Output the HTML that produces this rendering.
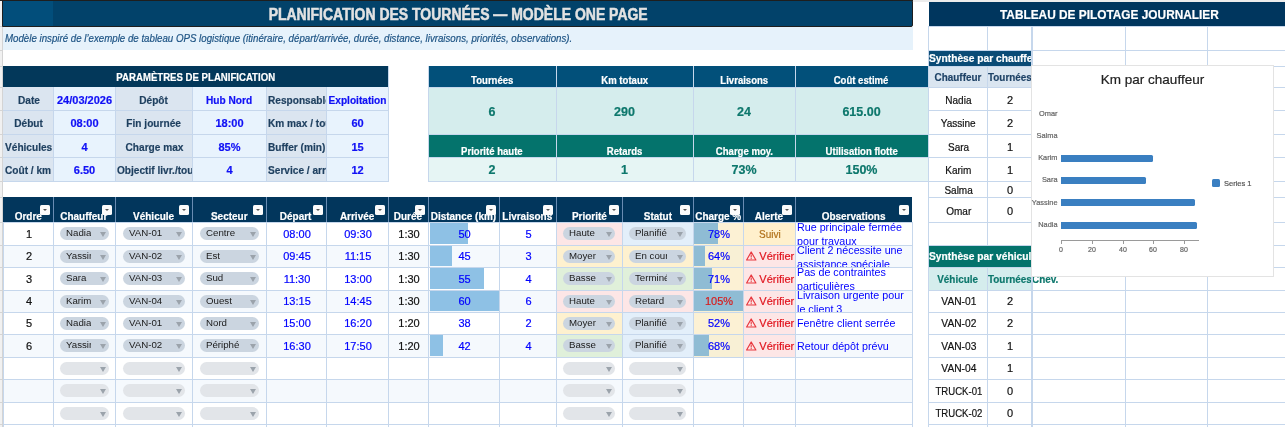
<!DOCTYPE html><html><head><meta charset="utf-8"><style>html,body{margin:0;padding:0;background:#fff;}#c{position:relative;width:1285px;height:427px;overflow:hidden;background:#fff;font-family:"Liberation Sans",sans-serif;}#c div{position:absolute;box-sizing:border-box;}#c .t{display:flex;white-space:nowrap;overflow:hidden;will-change:transform;-webkit-text-stroke:0.2px currentColor;}#c .ns{-webkit-text-stroke:0;}</style></head><body><div id="c">
<div style="left:0px;top:0px;width:3px;height:427px;background:#f1f1f1;"></div>
<div style="left:2px;top:0px;width:1px;height:427px;background:#d4d4d4;"></div>
<div style="left:0px;top:26px;width:2px;height:1px;background:#d4d4d4;"></div>
<div style="left:0px;top:50px;width:2px;height:1px;background:#d4d4d4;"></div>
<div style="left:0px;top:66px;width:2px;height:1px;background:#d4d4d4;"></div>
<div style="left:0px;top:87px;width:2px;height:1px;background:#d4d4d4;"></div>
<div style="left:0px;top:110px;width:2px;height:1px;background:#d4d4d4;"></div>
<div style="left:0px;top:134px;width:2px;height:1px;background:#d4d4d4;"></div>
<div style="left:0px;top:157px;width:2px;height:1px;background:#d4d4d4;"></div>
<div style="left:0px;top:181px;width:2px;height:1px;background:#d4d4d4;"></div>
<div style="left:0px;top:197px;width:2px;height:1px;background:#d4d4d4;"></div>
<div style="left:0px;top:222px;width:2px;height:1px;background:#d4d4d4;"></div>
<div style="left:0px;top:245px;width:2px;height:1px;background:#d4d4d4;"></div>
<div style="left:0px;top:267px;width:2px;height:1px;background:#d4d4d4;"></div>
<div style="left:0px;top:290px;width:2px;height:1px;background:#d4d4d4;"></div>
<div style="left:0px;top:312px;width:2px;height:1px;background:#d4d4d4;"></div>
<div style="left:0px;top:334px;width:2px;height:1px;background:#d4d4d4;"></div>
<div style="left:0px;top:357px;width:2px;height:1px;background:#d4d4d4;"></div>
<div style="left:0px;top:379px;width:2px;height:1px;background:#d4d4d4;"></div>
<div style="left:0px;top:402px;width:2px;height:1px;background:#d4d4d4;"></div>
<div style="left:0px;top:424px;width:2px;height:1px;background:#d4d4d4;"></div>
<div style="left:0px;top:447px;width:2px;height:1px;background:#d4d4d4;"></div>
<div style="left:0px;top:0px;width:913px;height:1px;background:#262626;"></div>
<div style="left:913px;top:0px;width:372px;height:2px;background:#ececec;"></div>
<div style="left:2px;top:0px;width:911px;height:27px;background:#02426a;border:1px solid #1e1e1e;border-radius:0 2px 2px 0;"></div>
<div style="left:3px;top:1px;width:50px;height:25px;background:#024e7b;"></div>
<div class="t" style="left:3px;top:2px;width:910px;height:25px;justify-content:center;align-items:center;font-size:15.8px;color:#e2e2e2;font-weight:bold;font-style:normal;-webkit-text-stroke:0.5px #e2e2e2;"><span style="display:inline-block;transform:scaleX(0.885);transform-origin:center">PLANIFICATION DES TOURNÉES — MODÈLE ONE PAGE</span></div>
<div style="left:3px;top:27px;width:910px;height:23px;background:#e6f2fb;"></div>
<div class="t" style="left:3px;top:26px;width:910px;height:24px;justify-content:flex-start;align-items:center;font-size:10px;color:#1f5585;font-weight:normal;font-style:italic;padding-left:2px;"><span style="display:inline-block;transform:scaleX(0.97);transform-origin:left">Modèle inspiré de l’exemple de tableau OPS logistique (itinéraire, départ/arrivée, durée, distance, livraisons, priorités, observations).</span></div>
<div style="left:3px;top:66px;width:385px;height:21px;background:#03385a;"></div>
<div class="t" style="left:3px;top:66px;width:385px;height:21px;justify-content:center;align-items:center;font-size:10.5px;color:#fff;font-weight:bold;font-style:normal;"><span style="display:inline-block;transform:scaleX(0.915);transform-origin:center">PARAMÈTRES DE PLANIFICATION</span></div>
<div style="left:3px;top:87px;width:50px;height:23px;background:#dbe5f0;"></div>
<div class="t" style="left:4px;top:87.7px;width:49px;height:23px;justify-content:center;align-items:center;font-size:11px;color:#1e3f5f;font-weight:bold;font-style:normal;"><span style="display:inline-block;transform:scaleX(0.92);transform-origin:center">Date</span></div>
<div style="left:53px;top:87px;width:62px;height:23px;background:#e8f3fd;"></div>
<div class="t" style="left:54px;top:87.7px;width:61px;height:23px;justify-content:center;align-items:center;font-size:11px;color:#1010f5;font-weight:bold;font-style:normal;">24/03/2026</div>
<div style="left:115px;top:87px;width:77px;height:23px;background:#dbe5f0;"></div>
<div class="t" style="left:116px;top:87.7px;width:76px;height:23px;justify-content:center;align-items:center;font-size:11px;color:#1e3f5f;font-weight:bold;font-style:normal;"><span style="display:inline-block;transform:scaleX(0.92);transform-origin:center">Dépôt</span></div>
<div style="left:192px;top:87px;width:74px;height:23px;background:#e8f3fd;"></div>
<div class="t" style="left:193px;top:87.7px;width:73px;height:23px;justify-content:center;align-items:center;font-size:11px;color:#1010f5;font-weight:bold;font-style:normal;"><span style="display:inline-block;transform:scaleX(0.92);transform-origin:center">Hub Nord</span></div>
<div style="left:266px;top:87px;width:60px;height:23px;background:#dbe5f0;"></div>
<div class="t" style="left:267px;top:87.7px;width:59px;height:23px;justify-content:flex-start;align-items:center;font-size:11px;color:#1e3f5f;font-weight:bold;font-style:normal;padding-left:1px;"><span style="display:inline-block;transform:scaleX(0.92);transform-origin:left">Responsable</span></div>
<div style="left:326px;top:87px;width:62px;height:23px;background:#e8f3fd;"></div>
<div class="t" style="left:327px;top:87.7px;width:61px;height:23px;justify-content:center;align-items:center;font-size:11px;color:#1010f5;font-weight:bold;font-style:normal;"><span style="display:inline-block;transform:scaleX(0.92);transform-origin:center">Exploitation</span></div>
<div style="left:3px;top:110px;width:50px;height:24px;background:#dbe5f0;"></div>
<div class="t" style="left:4px;top:110.7px;width:49px;height:24px;justify-content:center;align-items:center;font-size:11px;color:#1e3f5f;font-weight:bold;font-style:normal;"><span style="display:inline-block;transform:scaleX(0.92);transform-origin:center">Début</span></div>
<div style="left:53px;top:110px;width:62px;height:24px;background:#e8f3fd;"></div>
<div class="t" style="left:54px;top:110.7px;width:61px;height:24px;justify-content:center;align-items:center;font-size:11px;color:#1010f5;font-weight:bold;font-style:normal;">08:00</div>
<div style="left:115px;top:110px;width:77px;height:24px;background:#dbe5f0;"></div>
<div class="t" style="left:116px;top:110.7px;width:76px;height:24px;justify-content:center;align-items:center;font-size:11px;color:#1e3f5f;font-weight:bold;font-style:normal;"><span style="display:inline-block;transform:scaleX(0.92);transform-origin:center">Fin journée</span></div>
<div style="left:192px;top:110px;width:74px;height:24px;background:#e8f3fd;"></div>
<div class="t" style="left:193px;top:110.7px;width:73px;height:24px;justify-content:center;align-items:center;font-size:11px;color:#1010f5;font-weight:bold;font-style:normal;">18:00</div>
<div style="left:266px;top:110px;width:60px;height:24px;background:#dbe5f0;"></div>
<div class="t" style="left:267px;top:110.7px;width:59px;height:24px;justify-content:flex-start;align-items:center;font-size:11px;color:#1e3f5f;font-weight:bold;font-style:normal;padding-left:1px;"><span style="display:inline-block;transform:scaleX(0.92);transform-origin:left">Km max / tournée</span></div>
<div style="left:326px;top:110px;width:62px;height:24px;background:#e8f3fd;"></div>
<div class="t" style="left:327px;top:110.7px;width:61px;height:24px;justify-content:center;align-items:center;font-size:11px;color:#1010f5;font-weight:bold;font-style:normal;">60</div>
<div style="left:3px;top:134px;width:50px;height:23px;background:#dbe5f0;"></div>
<div class="t" style="left:4px;top:134.7px;width:49px;height:23px;justify-content:flex-start;align-items:center;font-size:11px;color:#1e3f5f;font-weight:bold;font-style:normal;padding-left:1px;"><span style="display:inline-block;transform:scaleX(0.92);transform-origin:left">Véhicules</span></div>
<div style="left:53px;top:134px;width:62px;height:23px;background:#e8f3fd;"></div>
<div class="t" style="left:54px;top:134.7px;width:61px;height:23px;justify-content:center;align-items:center;font-size:11px;color:#1010f5;font-weight:bold;font-style:normal;">4</div>
<div style="left:115px;top:134px;width:77px;height:23px;background:#dbe5f0;"></div>
<div class="t" style="left:116px;top:134.7px;width:76px;height:23px;justify-content:center;align-items:center;font-size:11px;color:#1e3f5f;font-weight:bold;font-style:normal;"><span style="display:inline-block;transform:scaleX(0.92);transform-origin:center">Charge max</span></div>
<div style="left:192px;top:134px;width:74px;height:23px;background:#e8f3fd;"></div>
<div class="t" style="left:193px;top:134.7px;width:73px;height:23px;justify-content:center;align-items:center;font-size:11px;color:#1010f5;font-weight:bold;font-style:normal;">85%</div>
<div style="left:266px;top:134px;width:60px;height:23px;background:#dbe5f0;"></div>
<div class="t" style="left:267px;top:134.7px;width:59px;height:23px;justify-content:flex-start;align-items:center;font-size:11px;color:#1e3f5f;font-weight:bold;font-style:normal;padding-left:1px;"><span style="display:inline-block;transform:scaleX(0.92);transform-origin:left">Buffer (min)</span></div>
<div style="left:326px;top:134px;width:62px;height:23px;background:#e8f3fd;"></div>
<div class="t" style="left:327px;top:134.7px;width:61px;height:23px;justify-content:center;align-items:center;font-size:11px;color:#1010f5;font-weight:bold;font-style:normal;">15</div>
<div style="left:3px;top:157px;width:50px;height:24px;background:#dbe5f0;"></div>
<div class="t" style="left:4px;top:157.7px;width:49px;height:24px;justify-content:flex-start;align-items:center;font-size:11px;color:#1e3f5f;font-weight:bold;font-style:normal;padding-left:1px;"><span style="display:inline-block;transform:scaleX(0.92);transform-origin:left">Coût / km</span></div>
<div style="left:53px;top:157px;width:62px;height:24px;background:#e8f3fd;"></div>
<div class="t" style="left:54px;top:157.7px;width:61px;height:24px;justify-content:center;align-items:center;font-size:11px;color:#1010f5;font-weight:bold;font-style:normal;">6.50</div>
<div style="left:115px;top:157px;width:77px;height:24px;background:#dbe5f0;"></div>
<div class="t" style="left:116px;top:157.7px;width:76px;height:24px;justify-content:flex-start;align-items:center;font-size:11px;color:#1e3f5f;font-weight:bold;font-style:normal;padding-left:1px;"><span style="display:inline-block;transform:scaleX(0.92);transform-origin:left">Objectif livr./tournée</span></div>
<div style="left:192px;top:157px;width:74px;height:24px;background:#e8f3fd;"></div>
<div class="t" style="left:193px;top:157.7px;width:73px;height:24px;justify-content:center;align-items:center;font-size:11px;color:#1010f5;font-weight:bold;font-style:normal;">4</div>
<div style="left:266px;top:157px;width:60px;height:24px;background:#dbe5f0;"></div>
<div class="t" style="left:267px;top:157.7px;width:59px;height:24px;justify-content:flex-start;align-items:center;font-size:11px;color:#1e3f5f;font-weight:bold;font-style:normal;padding-left:1px;"><span style="display:inline-block;transform:scaleX(0.92);transform-origin:left">Service / arrêt</span></div>
<div style="left:326px;top:157px;width:62px;height:24px;background:#e8f3fd;"></div>
<div class="t" style="left:327px;top:157.7px;width:61px;height:24px;justify-content:center;align-items:center;font-size:11px;color:#1010f5;font-weight:bold;font-style:normal;">12</div>
<div style="left:53px;top:87px;width:1px;height:94px;background:#c6d7ec;"></div>
<div style="left:115px;top:87px;width:1px;height:94px;background:#c6d7ec;"></div>
<div style="left:192px;top:87px;width:1px;height:94px;background:#c6d7ec;"></div>
<div style="left:266px;top:87px;width:1px;height:94px;background:#c6d7ec;"></div>
<div style="left:326px;top:87px;width:1px;height:94px;background:#c6d7ec;"></div>
<div style="left:3px;top:110px;width:385px;height:1px;background:#c6d7ec;"></div>
<div style="left:3px;top:134px;width:385px;height:1px;background:#c6d7ec;"></div>
<div style="left:3px;top:157px;width:385px;height:1px;background:#c6d7ec;"></div>
<div style="left:388px;top:66px;width:1px;height:115px;background:#c6d7ec;"></div>
<div style="left:3px;top:181px;width:386px;height:1px;background:#c6d7ec;"></div>
<div style="left:428px;top:66px;width:128px;height:21px;background:#02507a;"></div>
<div class="t" style="left:428px;top:66px;width:128px;height:21px;justify-content:center;align-items:flex-end;font-size:10.5px;color:#fff;font-weight:bold;font-style:normal;padding-bottom:0.7px;"><span style="display:inline-block;transform:scaleX(0.91);transform-origin:center">Tournées</span></div>
<div style="left:428px;top:87px;width:128px;height:47px;background:#d5eded;"></div>
<div class="t" style="left:428px;top:88px;width:128px;height:47px;justify-content:center;align-items:center;font-size:12.5px;color:#0d776c;font-weight:bold;font-style:normal;">6</div>
<div style="left:428px;top:134px;width:128px;height:23px;background:#04736c;"></div>
<div class="t" style="left:428px;top:134px;width:128px;height:23px;justify-content:center;align-items:flex-end;font-size:10.5px;color:#fff;font-weight:bold;font-style:normal;padding-bottom:0px;"><span style="display:inline-block;transform:scaleX(0.91);transform-origin:center">Priorité haute</span></div>
<div style="left:428px;top:157px;width:128px;height:24px;background:#e6f5f4;"></div>
<div class="t" style="left:428px;top:157.5px;width:128px;height:24px;justify-content:center;align-items:center;font-size:12.5px;color:#0d776c;font-weight:bold;font-style:normal;">2</div>
<div style="left:556px;top:66px;width:137px;height:21px;background:#02507a;"></div>
<div class="t" style="left:556px;top:66px;width:137px;height:21px;justify-content:center;align-items:flex-end;font-size:10.5px;color:#fff;font-weight:bold;font-style:normal;padding-bottom:0.7px;"><span style="display:inline-block;transform:scaleX(0.91);transform-origin:center">Km totaux</span></div>
<div style="left:556px;top:87px;width:137px;height:47px;background:#d5eded;"></div>
<div class="t" style="left:556px;top:88px;width:137px;height:47px;justify-content:center;align-items:center;font-size:12.5px;color:#0d776c;font-weight:bold;font-style:normal;">290</div>
<div style="left:556px;top:134px;width:137px;height:23px;background:#04736c;"></div>
<div class="t" style="left:556px;top:134px;width:137px;height:23px;justify-content:center;align-items:flex-end;font-size:10.5px;color:#fff;font-weight:bold;font-style:normal;padding-bottom:0px;"><span style="display:inline-block;transform:scaleX(0.91);transform-origin:center">Retards</span></div>
<div style="left:556px;top:157px;width:137px;height:24px;background:#e6f5f4;"></div>
<div class="t" style="left:556px;top:157.5px;width:137px;height:24px;justify-content:center;align-items:center;font-size:12.5px;color:#0d776c;font-weight:bold;font-style:normal;">1</div>
<div style="left:693px;top:66px;width:102px;height:21px;background:#02507a;"></div>
<div class="t" style="left:693px;top:66px;width:102px;height:21px;justify-content:center;align-items:flex-end;font-size:10.5px;color:#fff;font-weight:bold;font-style:normal;padding-bottom:0.7px;"><span style="display:inline-block;transform:scaleX(0.91);transform-origin:center">Livraisons</span></div>
<div style="left:693px;top:87px;width:102px;height:47px;background:#d5eded;"></div>
<div class="t" style="left:693px;top:88px;width:102px;height:47px;justify-content:center;align-items:center;font-size:12.5px;color:#0d776c;font-weight:bold;font-style:normal;">24</div>
<div style="left:693px;top:134px;width:102px;height:23px;background:#04736c;"></div>
<div class="t" style="left:693px;top:134px;width:102px;height:23px;justify-content:center;align-items:flex-end;font-size:10.5px;color:#fff;font-weight:bold;font-style:normal;padding-bottom:0px;"><span style="display:inline-block;transform:scaleX(0.91);transform-origin:center">Charge moy.</span></div>
<div style="left:693px;top:157px;width:102px;height:24px;background:#e6f5f4;"></div>
<div class="t" style="left:693px;top:157.5px;width:102px;height:24px;justify-content:center;align-items:center;font-size:12.5px;color:#0d776c;font-weight:bold;font-style:normal;">73%</div>
<div style="left:795px;top:66px;width:133px;height:21px;background:#02507a;"></div>
<div class="t" style="left:795px;top:66px;width:133px;height:21px;justify-content:center;align-items:flex-end;font-size:10.5px;color:#fff;font-weight:bold;font-style:normal;padding-bottom:0.7px;"><span style="display:inline-block;transform:scaleX(0.91);transform-origin:center">Coût estimé</span></div>
<div style="left:795px;top:87px;width:133px;height:47px;background:#d5eded;"></div>
<div class="t" style="left:795px;top:88px;width:133px;height:47px;justify-content:center;align-items:center;font-size:12.5px;color:#0d776c;font-weight:bold;font-style:normal;">615.00</div>
<div style="left:795px;top:134px;width:133px;height:23px;background:#04736c;"></div>
<div class="t" style="left:795px;top:134px;width:133px;height:23px;justify-content:center;align-items:flex-end;font-size:10.5px;color:#fff;font-weight:bold;font-style:normal;padding-bottom:0px;"><span style="display:inline-block;transform:scaleX(0.91);transform-origin:center">Utilisation flotte</span></div>
<div style="left:795px;top:157px;width:133px;height:24px;background:#e6f5f4;"></div>
<div class="t" style="left:795px;top:157.5px;width:133px;height:24px;justify-content:center;align-items:center;font-size:12.5px;color:#0d776c;font-weight:bold;font-style:normal;">150%</div>
<div style="left:556px;top:66px;width:1px;height:115px;background:#c6d7ec;"></div>
<div style="left:693px;top:66px;width:1px;height:115px;background:#c6d7ec;"></div>
<div style="left:795px;top:66px;width:1px;height:115px;background:#c6d7ec;"></div>
<div style="left:428px;top:66px;width:1px;height:115px;background:#c6d7ec;"></div>
<div style="left:428px;top:181px;width:500px;height:1px;background:#c6d7ec;"></div>
<div style="left:428px;top:134px;width:500px;height:1px;background:#c6d7ec;"></div>
<div style="left:428px;top:157px;width:500px;height:1px;background:#c6d7ec;"></div>
<div style="left:428px;top:87px;width:500px;height:1px;background:#c6d7ec;"></div>
<div style="left:3px;top:197px;width:909px;height:25px;background:#02365c;"></div>
<div class="t" style="left:3px;top:197px;width:50px;height:25px;justify-content:center;align-items:flex-end;font-size:10.5px;color:#fff;font-weight:bold;font-style:normal;padding-bottom:0.3px;"><span style="display:inline-block;transform:scaleX(0.95);transform-origin:center">Ordre</span></div>
<div style="left:40px;top:205px;width:10px;height:10px;background:#fbfbfb;border-radius:1.5px;"></div>
<div style="left:43px;top:209px;width:0;height:0;border-left:2px solid transparent;border-right:2px solid transparent;border-top:2px solid #555;"></div>
<div class="t" style="left:53px;top:197px;width:62px;height:25px;justify-content:center;align-items:flex-end;font-size:10.5px;color:#fff;font-weight:bold;font-style:normal;padding-bottom:0.3px;"><span style="display:inline-block;transform:scaleX(0.95);transform-origin:center">Chauffeur</span></div>
<div style="left:53px;top:197px;width:1px;height:25px;background:#6a8cb2;"></div>
<div style="left:102px;top:205px;width:10px;height:10px;background:#fbfbfb;border-radius:1.5px;"></div>
<div style="left:105px;top:209px;width:0;height:0;border-left:2px solid transparent;border-right:2px solid transparent;border-top:2px solid #555;"></div>
<div class="t" style="left:115px;top:197px;width:77px;height:25px;justify-content:center;align-items:flex-end;font-size:10.5px;color:#fff;font-weight:bold;font-style:normal;padding-bottom:0.3px;"><span style="display:inline-block;transform:scaleX(0.95);transform-origin:center">Véhicule</span></div>
<div style="left:115px;top:197px;width:1px;height:25px;background:#6a8cb2;"></div>
<div style="left:179px;top:205px;width:10px;height:10px;background:#fbfbfb;border-radius:1.5px;"></div>
<div style="left:182px;top:209px;width:0;height:0;border-left:2px solid transparent;border-right:2px solid transparent;border-top:2px solid #555;"></div>
<div class="t" style="left:192px;top:197px;width:74px;height:25px;justify-content:center;align-items:flex-end;font-size:10.5px;color:#fff;font-weight:bold;font-style:normal;padding-bottom:0.3px;"><span style="display:inline-block;transform:scaleX(0.95);transform-origin:center">Secteur</span></div>
<div style="left:192px;top:197px;width:1px;height:25px;background:#6a8cb2;"></div>
<div style="left:253px;top:205px;width:10px;height:10px;background:#fbfbfb;border-radius:1.5px;"></div>
<div style="left:256px;top:209px;width:0;height:0;border-left:2px solid transparent;border-right:2px solid transparent;border-top:2px solid #555;"></div>
<div class="t" style="left:266px;top:197px;width:60px;height:25px;justify-content:center;align-items:flex-end;font-size:10.5px;color:#fff;font-weight:bold;font-style:normal;padding-bottom:0.3px;"><span style="display:inline-block;transform:scaleX(0.95);transform-origin:center">Départ</span></div>
<div style="left:266px;top:197px;width:1px;height:25px;background:#6a8cb2;"></div>
<div style="left:313px;top:205px;width:10px;height:10px;background:#fbfbfb;border-radius:1.5px;"></div>
<div style="left:316px;top:209px;width:0;height:0;border-left:2px solid transparent;border-right:2px solid transparent;border-top:2px solid #555;"></div>
<div class="t" style="left:326px;top:197px;width:62px;height:25px;justify-content:center;align-items:flex-end;font-size:10.5px;color:#fff;font-weight:bold;font-style:normal;padding-bottom:0.3px;"><span style="display:inline-block;transform:scaleX(0.95);transform-origin:center">Arrivée</span></div>
<div style="left:326px;top:197px;width:1px;height:25px;background:#6a8cb2;"></div>
<div style="left:375px;top:205px;width:10px;height:10px;background:#fbfbfb;border-radius:1.5px;"></div>
<div style="left:378px;top:209px;width:0;height:0;border-left:2px solid transparent;border-right:2px solid transparent;border-top:2px solid #555;"></div>
<div class="t" style="left:388px;top:197px;width:40px;height:25px;justify-content:center;align-items:flex-end;font-size:10.5px;color:#fff;font-weight:bold;font-style:normal;padding-bottom:0.3px;"><span style="display:inline-block;transform:scaleX(0.95);transform-origin:center">Durée</span></div>
<div style="left:388px;top:197px;width:1px;height:25px;background:#6a8cb2;"></div>
<div style="left:415px;top:205px;width:10px;height:10px;background:#fbfbfb;border-radius:1.5px;"></div>
<div style="left:418px;top:209px;width:0;height:0;border-left:2px solid transparent;border-right:2px solid transparent;border-top:2px solid #555;"></div>
<div class="t" style="left:428px;top:197px;width:71px;height:25px;justify-content:center;align-items:flex-end;font-size:10.5px;color:#fff;font-weight:bold;font-style:normal;padding-bottom:0.3px;"><span style="display:inline-block;transform:scaleX(0.95);transform-origin:center">Distance (km)</span></div>
<div style="left:428px;top:197px;width:1px;height:25px;background:#6a8cb2;"></div>
<div style="left:486px;top:205px;width:10px;height:10px;background:#fbfbfb;border-radius:1.5px;"></div>
<div style="left:489px;top:209px;width:0;height:0;border-left:2px solid transparent;border-right:2px solid transparent;border-top:2px solid #555;"></div>
<div class="t" style="left:499px;top:197px;width:57px;height:25px;justify-content:center;align-items:flex-end;font-size:10.5px;color:#fff;font-weight:bold;font-style:normal;padding-bottom:0.3px;"><span style="display:inline-block;transform:scaleX(0.95);transform-origin:center">Livraisons</span></div>
<div style="left:499px;top:197px;width:1px;height:25px;background:#6a8cb2;"></div>
<div style="left:543px;top:205px;width:10px;height:10px;background:#fbfbfb;border-radius:1.5px;"></div>
<div style="left:546px;top:209px;width:0;height:0;border-left:2px solid transparent;border-right:2px solid transparent;border-top:2px solid #555;"></div>
<div class="t" style="left:556px;top:197px;width:66px;height:25px;justify-content:center;align-items:flex-end;font-size:10.5px;color:#fff;font-weight:bold;font-style:normal;padding-bottom:0.3px;"><span style="display:inline-block;transform:scaleX(0.95);transform-origin:center">Priorité</span></div>
<div style="left:556px;top:197px;width:1px;height:25px;background:#6a8cb2;"></div>
<div style="left:609px;top:205px;width:10px;height:10px;background:#fbfbfb;border-radius:1.5px;"></div>
<div style="left:612px;top:209px;width:0;height:0;border-left:2px solid transparent;border-right:2px solid transparent;border-top:2px solid #555;"></div>
<div class="t" style="left:622px;top:197px;width:71px;height:25px;justify-content:center;align-items:flex-end;font-size:10.5px;color:#fff;font-weight:bold;font-style:normal;padding-bottom:0.3px;"><span style="display:inline-block;transform:scaleX(0.95);transform-origin:center">Statut</span></div>
<div style="left:622px;top:197px;width:1px;height:25px;background:#6a8cb2;"></div>
<div style="left:680px;top:205px;width:10px;height:10px;background:#fbfbfb;border-radius:1.5px;"></div>
<div style="left:683px;top:209px;width:0;height:0;border-left:2px solid transparent;border-right:2px solid transparent;border-top:2px solid #555;"></div>
<div class="t" style="left:693px;top:197px;width:50px;height:25px;justify-content:center;align-items:flex-end;font-size:10.5px;color:#fff;font-weight:bold;font-style:normal;padding-bottom:0.3px;"><span style="display:inline-block;transform:scaleX(0.95);transform-origin:center">Charge %</span></div>
<div style="left:693px;top:197px;width:1px;height:25px;background:#6a8cb2;"></div>
<div style="left:730px;top:205px;width:10px;height:10px;background:#fbfbfb;border-radius:1.5px;"></div>
<div style="left:733px;top:209px;width:0;height:0;border-left:2px solid transparent;border-right:2px solid transparent;border-top:2px solid #555;"></div>
<div class="t" style="left:743px;top:197px;width:52px;height:25px;justify-content:center;align-items:flex-end;font-size:10.5px;color:#fff;font-weight:bold;font-style:normal;padding-bottom:0.3px;"><span style="display:inline-block;transform:scaleX(0.95);transform-origin:center">Alerte</span></div>
<div style="left:743px;top:197px;width:1px;height:25px;background:#6a8cb2;"></div>
<div style="left:782px;top:205px;width:10px;height:10px;background:#fbfbfb;border-radius:1.5px;"></div>
<div style="left:785px;top:209px;width:0;height:0;border-left:2px solid transparent;border-right:2px solid transparent;border-top:2px solid #555;"></div>
<div class="t" style="left:795px;top:197px;width:117px;height:25px;justify-content:center;align-items:flex-end;font-size:10.5px;color:#fff;font-weight:bold;font-style:normal;padding-bottom:0.3px;"><span style="display:inline-block;transform:scaleX(0.95);transform-origin:center">Observations</span></div>
<div style="left:795px;top:197px;width:1px;height:25px;background:#6a8cb2;"></div>
<div style="left:899px;top:205px;width:10px;height:10px;background:#fbfbfb;border-radius:1.5px;"></div>
<div style="left:902px;top:209px;width:0;height:0;border-left:2px solid transparent;border-right:2px solid transparent;border-top:2px solid #555;"></div>
<div style="left:3px;top:222px;width:909px;height:23px;background:#ffffff;"></div>
<div style="left:556px;top:222px;width:66px;height:23px;background:#fde6e6;"></div>
<div style="left:622px;top:222px;width:71px;height:23px;background:#e3effa;"></div>
<div style="left:693px;top:222px;width:50px;height:23px;background:#fcf1d4;"></div>
<div style="left:743px;top:222px;width:52px;height:23px;background:#fff0cc;"></div>
<div style="left:429.8px;top:223px;width:38px;height:21px;background:#8ec1e5;"></div>
<div style="left:694.3px;top:223px;width:24px;height:21px;background:#8fbcd4;"></div>
<div class="t" style="left:3.5px;top:222px;width:50px;height:23px;justify-content:center;align-items:center;font-size:11px;color:#111;font-weight:normal;font-style:normal;">1</div>
<div style="left:59.7px;top:226.8px;width:49.8px;height:13.6px;background:#cbd5e0;border-radius:6.8px;"></div>
<div class="t ns" style="left:66.0px;top:225.20000000000002px;width:24.499999999999996px;height:14px;align-items:center;font-size:9.7px;color:#1a1a1a;">Nadia</div>
<div style="left:100.39999999999999px;top:232.0px;width:0;height:0;border-left:3.2px solid transparent;border-right:3.2px solid transparent;border-top:5.4px solid #9ba3ab;"></div>
<div style="left:123.1px;top:226.8px;width:61.599999999999994px;height:13.6px;background:#cbd5e0;border-radius:6.8px;"></div>
<div class="t ns" style="left:129.4px;top:225.20000000000002px;width:36.3px;height:14px;align-items:center;font-size:9.7px;color:#1a1a1a;">VAN-01</div>
<div style="left:175.6px;top:232.0px;width:0;height:0;border-left:3.2px solid transparent;border-right:3.2px solid transparent;border-top:5.4px solid #9ba3ab;"></div>
<div style="left:199.9px;top:226.8px;width:59.20000000000002px;height:13.6px;background:#cbd5e0;border-radius:6.8px;"></div>
<div class="t ns" style="left:206.20000000000002px;top:225.20000000000002px;width:33.90000000000002px;height:14px;align-items:center;font-size:9.7px;color:#1a1a1a;">Centre</div>
<div style="left:250.00000000000003px;top:232.0px;width:0;height:0;border-left:3.2px solid transparent;border-right:3.2px solid transparent;border-top:5.4px solid #9ba3ab;"></div>
<div class="t" style="left:266.5px;top:222px;width:60px;height:23px;justify-content:center;align-items:center;font-size:11px;color:#0000ff;font-weight:normal;font-style:normal;">08:00</div>
<div class="t" style="left:326.5px;top:222px;width:62px;height:23px;justify-content:center;align-items:center;font-size:11px;color:#0000ff;font-weight:normal;font-style:normal;">09:30</div>
<div class="t" style="left:388.5px;top:222px;width:40px;height:23px;justify-content:center;align-items:center;font-size:11px;color:#111;font-weight:normal;font-style:normal;">1:30</div>
<div class="t" style="left:428.5px;top:222px;width:71px;height:23px;justify-content:center;align-items:center;font-size:11px;color:#0000ff;font-weight:normal;font-style:normal;">50</div>
<div class="t" style="left:499.5px;top:222px;width:57px;height:23px;justify-content:center;align-items:center;font-size:11px;color:#0000ff;font-weight:normal;font-style:normal;">5</div>
<div style="left:563.1px;top:226.8px;width:52.299999999999955px;height:13.6px;background:#cbd5e0;border-radius:6.8px;"></div>
<div class="t ns" style="left:569.4px;top:225.20000000000002px;width:26.999999999999954px;height:14px;align-items:center;font-size:9.7px;color:#1a1a1a;">Haute</div>
<div style="left:606.3px;top:232.0px;width:0;height:0;border-left:3.2px solid transparent;border-right:3.2px solid transparent;border-top:5.4px solid #9ba3ab;"></div>
<div style="left:629.1px;top:226.8px;width:56.89999999999998px;height:13.6px;background:#cbd5e0;border-radius:6.8px;"></div>
<div class="t ns" style="left:635.4px;top:225.20000000000002px;width:31.599999999999977px;height:14px;align-items:center;font-size:9.7px;color:#1a1a1a;">Planifié</div>
<div style="left:676.9px;top:232.0px;width:0;height:0;border-left:3.2px solid transparent;border-right:3.2px solid transparent;border-top:5.4px solid #9ba3ab;"></div>
<div class="t" style="left:693.5px;top:222px;width:50px;height:23px;justify-content:center;align-items:center;font-size:11px;color:#0000ff;font-weight:normal;font-style:normal;">78%</div>
<div class="t" style="left:743.5px;top:222px;width:52px;height:23px;justify-content:center;align-items:center;font-size:11px;color:#b0701a;font-weight:normal;font-style:normal;"><span style="display:inline-block;transform:scaleX(0.91);transform-origin:center">Suivi</span></div>
<div class="t ns" style="left:797px;top:222px;width:115px;height:23px;display:block;font-size:11px;line-height:14px;color:#0000ff;white-space:normal;"><div style="position:relative;top:-2px;white-space:nowrap;transform:scaleX(0.975);transform-origin:left">Rue principale fermée</div><div style="position:relative;top:-2px;white-space:nowrap;transform:scaleX(0.975);transform-origin:left">pour travaux</div></div>
<div style="left:3px;top:245px;width:909px;height:22px;background:#f5f9fd;"></div>
<div style="left:556px;top:245px;width:66px;height:22px;background:#fef1cf;"></div>
<div style="left:622px;top:245px;width:71px;height:22px;background:#fef1cf;"></div>
<div style="left:693px;top:245px;width:50px;height:22px;background:#f8f0d5;"></div>
<div style="left:743px;top:245px;width:52px;height:22px;background:#fde6e6;"></div>
<div style="left:429.8px;top:246px;width:22px;height:20px;background:#8ec1e5;"></div>
<div style="left:694.3px;top:246px;width:11px;height:20px;background:#8fbcd4;"></div>
<div class="t" style="left:3.5px;top:245px;width:50px;height:22px;justify-content:center;align-items:center;font-size:11px;color:#111;font-weight:normal;font-style:normal;">2</div>
<div style="left:59.7px;top:249.8px;width:49.8px;height:13.6px;background:#cbd5e0;border-radius:6.8px;"></div>
<div class="t ns" style="left:66.0px;top:248.20000000000002px;width:24.499999999999996px;height:14px;align-items:center;font-size:9.7px;color:#1a1a1a;">Yassine</div>
<div style="left:100.39999999999999px;top:255.0px;width:0;height:0;border-left:3.2px solid transparent;border-right:3.2px solid transparent;border-top:5.4px solid #9ba3ab;"></div>
<div style="left:123.1px;top:249.8px;width:61.599999999999994px;height:13.6px;background:#cbd5e0;border-radius:6.8px;"></div>
<div class="t ns" style="left:129.4px;top:248.20000000000002px;width:36.3px;height:14px;align-items:center;font-size:9.7px;color:#1a1a1a;">VAN-02</div>
<div style="left:175.6px;top:255.0px;width:0;height:0;border-left:3.2px solid transparent;border-right:3.2px solid transparent;border-top:5.4px solid #9ba3ab;"></div>
<div style="left:199.9px;top:249.8px;width:59.20000000000002px;height:13.6px;background:#cbd5e0;border-radius:6.8px;"></div>
<div class="t ns" style="left:206.20000000000002px;top:248.20000000000002px;width:33.90000000000002px;height:14px;align-items:center;font-size:9.7px;color:#1a1a1a;">Est</div>
<div style="left:250.00000000000003px;top:255.0px;width:0;height:0;border-left:3.2px solid transparent;border-right:3.2px solid transparent;border-top:5.4px solid #9ba3ab;"></div>
<div class="t" style="left:266.5px;top:245px;width:60px;height:22px;justify-content:center;align-items:center;font-size:11px;color:#0000ff;font-weight:normal;font-style:normal;">09:45</div>
<div class="t" style="left:326.5px;top:245px;width:62px;height:22px;justify-content:center;align-items:center;font-size:11px;color:#0000ff;font-weight:normal;font-style:normal;">11:15</div>
<div class="t" style="left:388.5px;top:245px;width:40px;height:22px;justify-content:center;align-items:center;font-size:11px;color:#111;font-weight:normal;font-style:normal;">1:30</div>
<div class="t" style="left:428.5px;top:245px;width:71px;height:22px;justify-content:center;align-items:center;font-size:11px;color:#0000ff;font-weight:normal;font-style:normal;">45</div>
<div class="t" style="left:499.5px;top:245px;width:57px;height:22px;justify-content:center;align-items:center;font-size:11px;color:#0000ff;font-weight:normal;font-style:normal;">3</div>
<div style="left:563.1px;top:249.8px;width:52.299999999999955px;height:13.6px;background:#cbd5e0;border-radius:6.8px;"></div>
<div class="t ns" style="left:569.4px;top:248.20000000000002px;width:26.999999999999954px;height:14px;align-items:center;font-size:9.7px;color:#1a1a1a;">Moyen</div>
<div style="left:606.3px;top:255.0px;width:0;height:0;border-left:3.2px solid transparent;border-right:3.2px solid transparent;border-top:5.4px solid #9ba3ab;"></div>
<div style="left:629.1px;top:249.8px;width:56.89999999999998px;height:13.6px;background:#cbd5e0;border-radius:6.8px;"></div>
<div class="t ns" style="left:635.4px;top:248.20000000000002px;width:31.599999999999977px;height:14px;align-items:center;font-size:9.7px;color:#1a1a1a;">En cours</div>
<div style="left:676.9px;top:255.0px;width:0;height:0;border-left:3.2px solid transparent;border-right:3.2px solid transparent;border-top:5.4px solid #9ba3ab;"></div>
<div class="t" style="left:693.5px;top:245px;width:50px;height:22px;justify-content:center;align-items:center;font-size:11px;color:#0000ff;font-weight:normal;font-style:normal;">64%</div>
<div class="t" style="left:744px;top:245.2px;width:52px;height:22px;justify-content:center;align-items:center;font-size:11px;color:#e0141e;font-weight:normal;font-style:normal;"><svg width="11" height="10" viewBox="0 0 11 10" style="margin-right:2.5px;margin-top:0.5px"><path d="M5.2 1 L9.9 9 L0.6 9 Z" fill="none" stroke="#e8383f" stroke-width="1.2" stroke-linejoin="round"/><path d="M5.2 3.6 V6.4" stroke="#e8383f" stroke-width="1.1"/><circle cx="5.2" cy="7.7" r="0.6" fill="#e8383f"/></svg>Vérifier</div>
<div class="t ns" style="left:797px;top:245px;width:115px;height:22px;display:block;font-size:11px;line-height:14px;color:#0000ff;white-space:normal;"><div style="position:relative;top:-2px;white-space:nowrap;transform:scaleX(0.975);transform-origin:left">Client 2 nécessite une</div><div style="position:relative;top:-2px;white-space:nowrap;transform:scaleX(0.975);transform-origin:left">assistance spéciale</div></div>
<div style="left:3px;top:267px;width:909px;height:23px;background:#ffffff;"></div>
<div style="left:556px;top:267px;width:66px;height:23px;background:#e0f0da;"></div>
<div style="left:622px;top:267px;width:71px;height:23px;background:#e0f0da;"></div>
<div style="left:693px;top:267px;width:50px;height:23px;background:#fcf1d4;"></div>
<div style="left:743px;top:267px;width:52px;height:23px;background:#fde6e6;"></div>
<div style="left:429.8px;top:268px;width:54px;height:21px;background:#8ec1e5;"></div>
<div style="left:694.3px;top:268px;width:18px;height:21px;background:#8fbcd4;"></div>
<div class="t" style="left:3.5px;top:267px;width:50px;height:23px;justify-content:center;align-items:center;font-size:11px;color:#111;font-weight:normal;font-style:normal;">3</div>
<div style="left:59.7px;top:271.8px;width:49.8px;height:13.6px;background:#cbd5e0;border-radius:6.8px;"></div>
<div class="t ns" style="left:66.0px;top:270.2px;width:24.499999999999996px;height:14px;align-items:center;font-size:9.7px;color:#1a1a1a;">Sara</div>
<div style="left:100.39999999999999px;top:277.0px;width:0;height:0;border-left:3.2px solid transparent;border-right:3.2px solid transparent;border-top:5.4px solid #9ba3ab;"></div>
<div style="left:123.1px;top:271.8px;width:61.599999999999994px;height:13.6px;background:#cbd5e0;border-radius:6.8px;"></div>
<div class="t ns" style="left:129.4px;top:270.2px;width:36.3px;height:14px;align-items:center;font-size:9.7px;color:#1a1a1a;">VAN-03</div>
<div style="left:175.6px;top:277.0px;width:0;height:0;border-left:3.2px solid transparent;border-right:3.2px solid transparent;border-top:5.4px solid #9ba3ab;"></div>
<div style="left:199.9px;top:271.8px;width:59.20000000000002px;height:13.6px;background:#cbd5e0;border-radius:6.8px;"></div>
<div class="t ns" style="left:206.20000000000002px;top:270.2px;width:33.90000000000002px;height:14px;align-items:center;font-size:9.7px;color:#1a1a1a;">Sud</div>
<div style="left:250.00000000000003px;top:277.0px;width:0;height:0;border-left:3.2px solid transparent;border-right:3.2px solid transparent;border-top:5.4px solid #9ba3ab;"></div>
<div class="t" style="left:266.5px;top:267px;width:60px;height:23px;justify-content:center;align-items:center;font-size:11px;color:#0000ff;font-weight:normal;font-style:normal;">11:30</div>
<div class="t" style="left:326.5px;top:267px;width:62px;height:23px;justify-content:center;align-items:center;font-size:11px;color:#0000ff;font-weight:normal;font-style:normal;">13:00</div>
<div class="t" style="left:388.5px;top:267px;width:40px;height:23px;justify-content:center;align-items:center;font-size:11px;color:#111;font-weight:normal;font-style:normal;">1:30</div>
<div class="t" style="left:428.5px;top:267px;width:71px;height:23px;justify-content:center;align-items:center;font-size:11px;color:#0000ff;font-weight:normal;font-style:normal;">55</div>
<div class="t" style="left:499.5px;top:267px;width:57px;height:23px;justify-content:center;align-items:center;font-size:11px;color:#0000ff;font-weight:normal;font-style:normal;">4</div>
<div style="left:563.1px;top:271.8px;width:52.299999999999955px;height:13.6px;background:#cbd5e0;border-radius:6.8px;"></div>
<div class="t ns" style="left:569.4px;top:270.2px;width:26.999999999999954px;height:14px;align-items:center;font-size:9.7px;color:#1a1a1a;">Basse</div>
<div style="left:606.3px;top:277.0px;width:0;height:0;border-left:3.2px solid transparent;border-right:3.2px solid transparent;border-top:5.4px solid #9ba3ab;"></div>
<div style="left:629.1px;top:271.8px;width:56.89999999999998px;height:13.6px;background:#cbd5e0;border-radius:6.8px;"></div>
<div class="t ns" style="left:635.4px;top:270.2px;width:31.599999999999977px;height:14px;align-items:center;font-size:9.7px;color:#1a1a1a;">Terminé</div>
<div style="left:676.9px;top:277.0px;width:0;height:0;border-left:3.2px solid transparent;border-right:3.2px solid transparent;border-top:5.4px solid #9ba3ab;"></div>
<div class="t" style="left:693.5px;top:267px;width:50px;height:23px;justify-content:center;align-items:center;font-size:11px;color:#0000ff;font-weight:normal;font-style:normal;">71%</div>
<div class="t" style="left:744px;top:267.2px;width:52px;height:23px;justify-content:center;align-items:center;font-size:11px;color:#e0141e;font-weight:normal;font-style:normal;"><svg width="11" height="10" viewBox="0 0 11 10" style="margin-right:2.5px;margin-top:0.5px"><path d="M5.2 1 L9.9 9 L0.6 9 Z" fill="none" stroke="#e8383f" stroke-width="1.2" stroke-linejoin="round"/><path d="M5.2 3.6 V6.4" stroke="#e8383f" stroke-width="1.1"/><circle cx="5.2" cy="7.7" r="0.6" fill="#e8383f"/></svg>Vérifier</div>
<div class="t ns" style="left:797px;top:267px;width:115px;height:23px;display:block;font-size:11px;line-height:14px;color:#0000ff;white-space:normal;"><div style="position:relative;top:-2px;white-space:nowrap;transform:scaleX(0.975);transform-origin:left">Pas de contraintes</div><div style="position:relative;top:-2px;white-space:nowrap;transform:scaleX(0.975);transform-origin:left">particulières</div></div>
<div style="left:3px;top:290px;width:909px;height:22px;background:#f5f9fd;"></div>
<div style="left:556px;top:290px;width:66px;height:22px;background:#fde6e6;"></div>
<div style="left:622px;top:290px;width:71px;height:22px;background:#fde6e6;"></div>
<div style="left:693px;top:290px;width:50px;height:22px;background:#f8f0d5;"></div>
<div style="left:743px;top:290px;width:52px;height:22px;background:#fde6e6;"></div>
<div style="left:429.8px;top:291px;width:70px;height:20px;background:#8ec1e5;"></div>
<div style="left:694.3px;top:291px;width:49px;height:20px;background:#8fbcd4;"></div>
<div class="t" style="left:3.5px;top:290px;width:50px;height:22px;justify-content:center;align-items:center;font-size:11px;color:#111;font-weight:normal;font-style:normal;">4</div>
<div style="left:59.7px;top:294.8px;width:49.8px;height:13.6px;background:#cbd5e0;border-radius:6.8px;"></div>
<div class="t ns" style="left:66.0px;top:293.2px;width:24.499999999999996px;height:14px;align-items:center;font-size:9.7px;color:#1a1a1a;">Karim</div>
<div style="left:100.39999999999999px;top:300.0px;width:0;height:0;border-left:3.2px solid transparent;border-right:3.2px solid transparent;border-top:5.4px solid #9ba3ab;"></div>
<div style="left:123.1px;top:294.8px;width:61.599999999999994px;height:13.6px;background:#cbd5e0;border-radius:6.8px;"></div>
<div class="t ns" style="left:129.4px;top:293.2px;width:36.3px;height:14px;align-items:center;font-size:9.7px;color:#1a1a1a;">VAN-04</div>
<div style="left:175.6px;top:300.0px;width:0;height:0;border-left:3.2px solid transparent;border-right:3.2px solid transparent;border-top:5.4px solid #9ba3ab;"></div>
<div style="left:199.9px;top:294.8px;width:59.20000000000002px;height:13.6px;background:#cbd5e0;border-radius:6.8px;"></div>
<div class="t ns" style="left:206.20000000000002px;top:293.2px;width:33.90000000000002px;height:14px;align-items:center;font-size:9.7px;color:#1a1a1a;">Ouest</div>
<div style="left:250.00000000000003px;top:300.0px;width:0;height:0;border-left:3.2px solid transparent;border-right:3.2px solid transparent;border-top:5.4px solid #9ba3ab;"></div>
<div class="t" style="left:266.5px;top:290px;width:60px;height:22px;justify-content:center;align-items:center;font-size:11px;color:#0000ff;font-weight:normal;font-style:normal;">13:15</div>
<div class="t" style="left:326.5px;top:290px;width:62px;height:22px;justify-content:center;align-items:center;font-size:11px;color:#0000ff;font-weight:normal;font-style:normal;">14:45</div>
<div class="t" style="left:388.5px;top:290px;width:40px;height:22px;justify-content:center;align-items:center;font-size:11px;color:#111;font-weight:normal;font-style:normal;">1:30</div>
<div class="t" style="left:428.5px;top:290px;width:71px;height:22px;justify-content:center;align-items:center;font-size:11px;color:#0000ff;font-weight:normal;font-style:normal;">60</div>
<div class="t" style="left:499.5px;top:290px;width:57px;height:22px;justify-content:center;align-items:center;font-size:11px;color:#0000ff;font-weight:normal;font-style:normal;">6</div>
<div style="left:563.1px;top:294.8px;width:52.299999999999955px;height:13.6px;background:#cbd5e0;border-radius:6.8px;"></div>
<div class="t ns" style="left:569.4px;top:293.2px;width:26.999999999999954px;height:14px;align-items:center;font-size:9.7px;color:#1a1a1a;">Haute</div>
<div style="left:606.3px;top:300.0px;width:0;height:0;border-left:3.2px solid transparent;border-right:3.2px solid transparent;border-top:5.4px solid #9ba3ab;"></div>
<div style="left:629.1px;top:294.8px;width:56.89999999999998px;height:13.6px;background:#cbd5e0;border-radius:6.8px;"></div>
<div class="t ns" style="left:635.4px;top:293.2px;width:31.599999999999977px;height:14px;align-items:center;font-size:9.7px;color:#1a1a1a;">Retard</div>
<div style="left:676.9px;top:300.0px;width:0;height:0;border-left:3.2px solid transparent;border-right:3.2px solid transparent;border-top:5.4px solid #9ba3ab;"></div>
<div class="t" style="left:693.5px;top:290px;width:50px;height:22px;justify-content:center;align-items:center;font-size:11px;color:#d81b1b;font-weight:normal;font-style:normal;">105%</div>
<div class="t" style="left:744px;top:290.2px;width:52px;height:22px;justify-content:center;align-items:center;font-size:11px;color:#e0141e;font-weight:normal;font-style:normal;"><svg width="11" height="10" viewBox="0 0 11 10" style="margin-right:2.5px;margin-top:0.5px"><path d="M5.2 1 L9.9 9 L0.6 9 Z" fill="none" stroke="#e8383f" stroke-width="1.2" stroke-linejoin="round"/><path d="M5.2 3.6 V6.4" stroke="#e8383f" stroke-width="1.1"/><circle cx="5.2" cy="7.7" r="0.6" fill="#e8383f"/></svg>Vérifier</div>
<div class="t ns" style="left:797px;top:290px;width:115px;height:22px;display:block;font-size:11px;line-height:14px;color:#0000ff;white-space:normal;"><div style="position:relative;top:-2px;white-space:nowrap;transform:scaleX(0.975);transform-origin:left">Livraison urgente pour</div><div style="position:relative;top:-2px;white-space:nowrap;transform:scaleX(0.975);transform-origin:left">le client 3</div></div>
<div style="left:3px;top:312px;width:909px;height:22px;background:#ffffff;"></div>
<div style="left:556px;top:312px;width:66px;height:22px;background:#fef1cf;"></div>
<div style="left:622px;top:312px;width:71px;height:22px;background:#e3effa;"></div>
<div style="left:693px;top:312px;width:50px;height:22px;background:#fcf1d4;"></div>
<div style="left:743px;top:312px;width:52px;height:22px;background:#fde6e6;"></div>
<div class="t" style="left:3.5px;top:312px;width:50px;height:22px;justify-content:center;align-items:center;font-size:11px;color:#111;font-weight:normal;font-style:normal;">5</div>
<div style="left:59.7px;top:316.8px;width:49.8px;height:13.6px;background:#cbd5e0;border-radius:6.8px;"></div>
<div class="t ns" style="left:66.0px;top:315.2px;width:24.499999999999996px;height:14px;align-items:center;font-size:9.7px;color:#1a1a1a;">Nadia</div>
<div style="left:100.39999999999999px;top:322.0px;width:0;height:0;border-left:3.2px solid transparent;border-right:3.2px solid transparent;border-top:5.4px solid #9ba3ab;"></div>
<div style="left:123.1px;top:316.8px;width:61.599999999999994px;height:13.6px;background:#cbd5e0;border-radius:6.8px;"></div>
<div class="t ns" style="left:129.4px;top:315.2px;width:36.3px;height:14px;align-items:center;font-size:9.7px;color:#1a1a1a;">VAN-01</div>
<div style="left:175.6px;top:322.0px;width:0;height:0;border-left:3.2px solid transparent;border-right:3.2px solid transparent;border-top:5.4px solid #9ba3ab;"></div>
<div style="left:199.9px;top:316.8px;width:59.20000000000002px;height:13.6px;background:#cbd5e0;border-radius:6.8px;"></div>
<div class="t ns" style="left:206.20000000000002px;top:315.2px;width:33.90000000000002px;height:14px;align-items:center;font-size:9.7px;color:#1a1a1a;">Nord</div>
<div style="left:250.00000000000003px;top:322.0px;width:0;height:0;border-left:3.2px solid transparent;border-right:3.2px solid transparent;border-top:5.4px solid #9ba3ab;"></div>
<div class="t" style="left:266.5px;top:312px;width:60px;height:22px;justify-content:center;align-items:center;font-size:11px;color:#0000ff;font-weight:normal;font-style:normal;">15:00</div>
<div class="t" style="left:326.5px;top:312px;width:62px;height:22px;justify-content:center;align-items:center;font-size:11px;color:#0000ff;font-weight:normal;font-style:normal;">16:20</div>
<div class="t" style="left:388.5px;top:312px;width:40px;height:22px;justify-content:center;align-items:center;font-size:11px;color:#111;font-weight:normal;font-style:normal;">1:20</div>
<div class="t" style="left:428.5px;top:312px;width:71px;height:22px;justify-content:center;align-items:center;font-size:11px;color:#0000ff;font-weight:normal;font-style:normal;">38</div>
<div class="t" style="left:499.5px;top:312px;width:57px;height:22px;justify-content:center;align-items:center;font-size:11px;color:#0000ff;font-weight:normal;font-style:normal;">2</div>
<div style="left:563.1px;top:316.8px;width:52.299999999999955px;height:13.6px;background:#cbd5e0;border-radius:6.8px;"></div>
<div class="t ns" style="left:569.4px;top:315.2px;width:26.999999999999954px;height:14px;align-items:center;font-size:9.7px;color:#1a1a1a;">Moyen</div>
<div style="left:606.3px;top:322.0px;width:0;height:0;border-left:3.2px solid transparent;border-right:3.2px solid transparent;border-top:5.4px solid #9ba3ab;"></div>
<div style="left:629.1px;top:316.8px;width:56.89999999999998px;height:13.6px;background:#cbd5e0;border-radius:6.8px;"></div>
<div class="t ns" style="left:635.4px;top:315.2px;width:31.599999999999977px;height:14px;align-items:center;font-size:9.7px;color:#1a1a1a;">Planifié</div>
<div style="left:676.9px;top:322.0px;width:0;height:0;border-left:3.2px solid transparent;border-right:3.2px solid transparent;border-top:5.4px solid #9ba3ab;"></div>
<div class="t" style="left:693.5px;top:312px;width:50px;height:22px;justify-content:center;align-items:center;font-size:11px;color:#0000ff;font-weight:normal;font-style:normal;">52%</div>
<div class="t" style="left:744px;top:312.2px;width:52px;height:22px;justify-content:center;align-items:center;font-size:11px;color:#e0141e;font-weight:normal;font-style:normal;"><svg width="11" height="10" viewBox="0 0 11 10" style="margin-right:2.5px;margin-top:0.5px"><path d="M5.2 1 L9.9 9 L0.6 9 Z" fill="none" stroke="#e8383f" stroke-width="1.2" stroke-linejoin="round"/><path d="M5.2 3.6 V6.4" stroke="#e8383f" stroke-width="1.1"/><circle cx="5.2" cy="7.7" r="0.6" fill="#e8383f"/></svg>Vérifier</div>
<div class="t" style="left:797px;top:312px;width:115px;height:22px;justify-content:flex-start;align-items:center;font-size:11px;color:#0000ff;font-weight:normal;font-style:normal;-webkit-text-stroke:0;"><span style="display:inline-block;transform:scaleX(0.975);transform-origin:left">Fenêtre client serrée</span></div>
<div style="left:3px;top:334px;width:909px;height:23px;background:#f5f9fd;"></div>
<div style="left:556px;top:334px;width:66px;height:23px;background:#e0f0da;"></div>
<div style="left:622px;top:334px;width:71px;height:23px;background:#e3effa;"></div>
<div style="left:693px;top:334px;width:50px;height:23px;background:#f8f0d5;"></div>
<div style="left:743px;top:334px;width:52px;height:23px;background:#fde6e6;"></div>
<div style="left:429.8px;top:335px;width:13px;height:21px;background:#8ec1e5;"></div>
<div style="left:694.3px;top:335px;width:15px;height:21px;background:#8fbcd4;"></div>
<div class="t" style="left:3.5px;top:334px;width:50px;height:23px;justify-content:center;align-items:center;font-size:11px;color:#111;font-weight:normal;font-style:normal;">6</div>
<div style="left:59.7px;top:338.8px;width:49.8px;height:13.6px;background:#cbd5e0;border-radius:6.8px;"></div>
<div class="t ns" style="left:66.0px;top:337.2px;width:24.499999999999996px;height:14px;align-items:center;font-size:9.7px;color:#1a1a1a;">Yassine</div>
<div style="left:100.39999999999999px;top:344.0px;width:0;height:0;border-left:3.2px solid transparent;border-right:3.2px solid transparent;border-top:5.4px solid #9ba3ab;"></div>
<div style="left:123.1px;top:338.8px;width:61.599999999999994px;height:13.6px;background:#cbd5e0;border-radius:6.8px;"></div>
<div class="t ns" style="left:129.4px;top:337.2px;width:36.3px;height:14px;align-items:center;font-size:9.7px;color:#1a1a1a;">VAN-02</div>
<div style="left:175.6px;top:344.0px;width:0;height:0;border-left:3.2px solid transparent;border-right:3.2px solid transparent;border-top:5.4px solid #9ba3ab;"></div>
<div style="left:199.9px;top:338.8px;width:59.20000000000002px;height:13.6px;background:#cbd5e0;border-radius:6.8px;"></div>
<div class="t ns" style="left:206.20000000000002px;top:337.2px;width:33.90000000000002px;height:14px;align-items:center;font-size:9.7px;color:#1a1a1a;">Périphérique</div>
<div style="left:250.00000000000003px;top:344.0px;width:0;height:0;border-left:3.2px solid transparent;border-right:3.2px solid transparent;border-top:5.4px solid #9ba3ab;"></div>
<div class="t" style="left:266.5px;top:334px;width:60px;height:23px;justify-content:center;align-items:center;font-size:11px;color:#0000ff;font-weight:normal;font-style:normal;">16:30</div>
<div class="t" style="left:326.5px;top:334px;width:62px;height:23px;justify-content:center;align-items:center;font-size:11px;color:#0000ff;font-weight:normal;font-style:normal;">17:50</div>
<div class="t" style="left:388.5px;top:334px;width:40px;height:23px;justify-content:center;align-items:center;font-size:11px;color:#111;font-weight:normal;font-style:normal;">1:20</div>
<div class="t" style="left:428.5px;top:334px;width:71px;height:23px;justify-content:center;align-items:center;font-size:11px;color:#0000ff;font-weight:normal;font-style:normal;">42</div>
<div class="t" style="left:499.5px;top:334px;width:57px;height:23px;justify-content:center;align-items:center;font-size:11px;color:#0000ff;font-weight:normal;font-style:normal;">4</div>
<div style="left:563.1px;top:338.8px;width:52.299999999999955px;height:13.6px;background:#cbd5e0;border-radius:6.8px;"></div>
<div class="t ns" style="left:569.4px;top:337.2px;width:26.999999999999954px;height:14px;align-items:center;font-size:9.7px;color:#1a1a1a;">Basse</div>
<div style="left:606.3px;top:344.0px;width:0;height:0;border-left:3.2px solid transparent;border-right:3.2px solid transparent;border-top:5.4px solid #9ba3ab;"></div>
<div style="left:629.1px;top:338.8px;width:56.89999999999998px;height:13.6px;background:#cbd5e0;border-radius:6.8px;"></div>
<div class="t ns" style="left:635.4px;top:337.2px;width:31.599999999999977px;height:14px;align-items:center;font-size:9.7px;color:#1a1a1a;">Planifié</div>
<div style="left:676.9px;top:344.0px;width:0;height:0;border-left:3.2px solid transparent;border-right:3.2px solid transparent;border-top:5.4px solid #9ba3ab;"></div>
<div class="t" style="left:693.5px;top:334px;width:50px;height:23px;justify-content:center;align-items:center;font-size:11px;color:#0000ff;font-weight:normal;font-style:normal;">68%</div>
<div class="t" style="left:744px;top:334.2px;width:52px;height:23px;justify-content:center;align-items:center;font-size:11px;color:#e0141e;font-weight:normal;font-style:normal;"><svg width="11" height="10" viewBox="0 0 11 10" style="margin-right:2.5px;margin-top:0.5px"><path d="M5.2 1 L9.9 9 L0.6 9 Z" fill="none" stroke="#e8383f" stroke-width="1.2" stroke-linejoin="round"/><path d="M5.2 3.6 V6.4" stroke="#e8383f" stroke-width="1.1"/><circle cx="5.2" cy="7.7" r="0.6" fill="#e8383f"/></svg>Vérifier</div>
<div class="t" style="left:797px;top:334px;width:115px;height:23px;justify-content:flex-start;align-items:center;font-size:11px;color:#0000ff;font-weight:normal;font-style:normal;-webkit-text-stroke:0;"><span style="display:inline-block;transform:scaleX(0.975);transform-origin:left">Retour dépôt prévu</span></div>
<div style="left:3px;top:357px;width:909px;height:22px;background:#ffffff;"></div>
<div style="left:59.7px;top:361.8px;width:49.8px;height:13.6px;background:#e2e5e9;border-radius:6.8px;"></div>
<div style="left:100.39999999999999px;top:367.0px;width:0;height:0;border-left:3.2px solid transparent;border-right:3.2px solid transparent;border-top:5.4px solid #9ba3ab;"></div>
<div style="left:123.1px;top:361.8px;width:61.599999999999994px;height:13.6px;background:#e2e5e9;border-radius:6.8px;"></div>
<div style="left:175.6px;top:367.0px;width:0;height:0;border-left:3.2px solid transparent;border-right:3.2px solid transparent;border-top:5.4px solid #9ba3ab;"></div>
<div style="left:199.9px;top:361.8px;width:59.20000000000002px;height:13.6px;background:#e2e5e9;border-radius:6.8px;"></div>
<div style="left:250.00000000000003px;top:367.0px;width:0;height:0;border-left:3.2px solid transparent;border-right:3.2px solid transparent;border-top:5.4px solid #9ba3ab;"></div>
<div style="left:563.1px;top:361.8px;width:52.299999999999955px;height:13.6px;background:#e2e5e9;border-radius:6.8px;"></div>
<div style="left:606.3px;top:367.0px;width:0;height:0;border-left:3.2px solid transparent;border-right:3.2px solid transparent;border-top:5.4px solid #9ba3ab;"></div>
<div style="left:629.1px;top:361.8px;width:56.89999999999998px;height:13.6px;background:#e2e5e9;border-radius:6.8px;"></div>
<div style="left:676.9px;top:367.0px;width:0;height:0;border-left:3.2px solid transparent;border-right:3.2px solid transparent;border-top:5.4px solid #9ba3ab;"></div>
<div style="left:3px;top:379px;width:909px;height:23px;background:#f5f9fd;"></div>
<div style="left:59.7px;top:383.8px;width:49.8px;height:13.6px;background:#e2e5e9;border-radius:6.8px;"></div>
<div style="left:100.39999999999999px;top:389.0px;width:0;height:0;border-left:3.2px solid transparent;border-right:3.2px solid transparent;border-top:5.4px solid #9ba3ab;"></div>
<div style="left:123.1px;top:383.8px;width:61.599999999999994px;height:13.6px;background:#e2e5e9;border-radius:6.8px;"></div>
<div style="left:175.6px;top:389.0px;width:0;height:0;border-left:3.2px solid transparent;border-right:3.2px solid transparent;border-top:5.4px solid #9ba3ab;"></div>
<div style="left:199.9px;top:383.8px;width:59.20000000000002px;height:13.6px;background:#e2e5e9;border-radius:6.8px;"></div>
<div style="left:250.00000000000003px;top:389.0px;width:0;height:0;border-left:3.2px solid transparent;border-right:3.2px solid transparent;border-top:5.4px solid #9ba3ab;"></div>
<div style="left:563.1px;top:383.8px;width:52.299999999999955px;height:13.6px;background:#e2e5e9;border-radius:6.8px;"></div>
<div style="left:606.3px;top:389.0px;width:0;height:0;border-left:3.2px solid transparent;border-right:3.2px solid transparent;border-top:5.4px solid #9ba3ab;"></div>
<div style="left:629.1px;top:383.8px;width:56.89999999999998px;height:13.6px;background:#e2e5e9;border-radius:6.8px;"></div>
<div style="left:676.9px;top:389.0px;width:0;height:0;border-left:3.2px solid transparent;border-right:3.2px solid transparent;border-top:5.4px solid #9ba3ab;"></div>
<div style="left:3px;top:402px;width:909px;height:22px;background:#ffffff;"></div>
<div style="left:59.7px;top:406.8px;width:49.8px;height:13.6px;background:#e2e5e9;border-radius:6.8px;"></div>
<div style="left:100.39999999999999px;top:412.0px;width:0;height:0;border-left:3.2px solid transparent;border-right:3.2px solid transparent;border-top:5.4px solid #9ba3ab;"></div>
<div style="left:123.1px;top:406.8px;width:61.599999999999994px;height:13.6px;background:#e2e5e9;border-radius:6.8px;"></div>
<div style="left:175.6px;top:412.0px;width:0;height:0;border-left:3.2px solid transparent;border-right:3.2px solid transparent;border-top:5.4px solid #9ba3ab;"></div>
<div style="left:199.9px;top:406.8px;width:59.20000000000002px;height:13.6px;background:#e2e5e9;border-radius:6.8px;"></div>
<div style="left:250.00000000000003px;top:412.0px;width:0;height:0;border-left:3.2px solid transparent;border-right:3.2px solid transparent;border-top:5.4px solid #9ba3ab;"></div>
<div style="left:563.1px;top:406.8px;width:52.299999999999955px;height:13.6px;background:#e2e5e9;border-radius:6.8px;"></div>
<div style="left:606.3px;top:412.0px;width:0;height:0;border-left:3.2px solid transparent;border-right:3.2px solid transparent;border-top:5.4px solid #9ba3ab;"></div>
<div style="left:629.1px;top:406.8px;width:56.89999999999998px;height:13.6px;background:#e2e5e9;border-radius:6.8px;"></div>
<div style="left:676.9px;top:412.0px;width:0;height:0;border-left:3.2px solid transparent;border-right:3.2px solid transparent;border-top:5.4px solid #9ba3ab;"></div>
<div style="left:3px;top:222px;width:1px;height:205px;background:#c6d7ec;"></div>
<div style="left:53px;top:222px;width:1px;height:205px;background:#c6d7ec;"></div>
<div style="left:115px;top:222px;width:1px;height:205px;background:#c6d7ec;"></div>
<div style="left:192px;top:222px;width:1px;height:205px;background:#c6d7ec;"></div>
<div style="left:266px;top:222px;width:1px;height:205px;background:#c6d7ec;"></div>
<div style="left:326px;top:222px;width:1px;height:205px;background:#c6d7ec;"></div>
<div style="left:388px;top:222px;width:1px;height:205px;background:#c6d7ec;"></div>
<div style="left:428px;top:222px;width:1px;height:205px;background:#c6d7ec;"></div>
<div style="left:499px;top:222px;width:1px;height:205px;background:#c6d7ec;"></div>
<div style="left:556px;top:222px;width:1px;height:205px;background:#c6d7ec;"></div>
<div style="left:622px;top:222px;width:1px;height:205px;background:#c6d7ec;"></div>
<div style="left:693px;top:222px;width:1px;height:205px;background:#c6d7ec;"></div>
<div style="left:743px;top:222px;width:1px;height:205px;background:#c6d7ec;"></div>
<div style="left:795px;top:222px;width:1px;height:205px;background:#c6d7ec;"></div>
<div style="left:912px;top:222px;width:1px;height:205px;background:#c6d7ec;"></div>
<div style="left:3px;top:222px;width:910px;height:1px;background:#c6d7ec;"></div>
<div style="left:3px;top:245px;width:910px;height:1px;background:#c6d7ec;"></div>
<div style="left:3px;top:267px;width:910px;height:1px;background:#c6d7ec;"></div>
<div style="left:3px;top:290px;width:910px;height:1px;background:#c6d7ec;"></div>
<div style="left:3px;top:312px;width:910px;height:1px;background:#c6d7ec;"></div>
<div style="left:3px;top:334px;width:910px;height:1px;background:#c6d7ec;"></div>
<div style="left:3px;top:357px;width:910px;height:1px;background:#c6d7ec;"></div>
<div style="left:3px;top:379px;width:910px;height:1px;background:#c6d7ec;"></div>
<div style="left:3px;top:402px;width:910px;height:1px;background:#c6d7ec;"></div>
<div style="left:3px;top:424px;width:910px;height:1px;background:#c6d7ec;"></div>
<div style="left:929px;top:2px;width:356px;height:24px;background:#00365e;"></div>
<div class="t" style="left:929px;top:2.6px;width:360px;height:24px;justify-content:center;align-items:center;font-size:12.5px;color:#fff;font-weight:bold;font-style:normal;"><span style="display:inline-block;transform:scaleX(0.948);transform-origin:center">TABLEAU DE PILOTAGE JOURNALIER</span></div>
<div style="left:928px;top:50px;width:103px;height:16px;background:#0a4b76;"></div>
<div class="t" style="left:929px;top:50px;width:102px;height:16px;justify-content:flex-start;align-items:center;font-size:11px;color:#fff;font-weight:bold;font-style:normal;"><span style="display:inline-block;transform:scaleX(0.93);transform-origin:left">Synthèse par chauffeur</span></div>
<div style="left:928px;top:66px;width:103px;height:21px;background:#dae5f0;"></div>
<div class="t" style="left:928px;top:66px;width:59px;height:21px;justify-content:center;align-items:center;font-size:11px;color:#1e4266;font-weight:bold;font-style:normal;"><span style="display:inline-block;transform:scaleX(0.9);transform-origin:center">Chauffeur</span></div>
<div class="t" style="left:988px;top:66px;width:43px;height:21px;justify-content:flex-start;align-items:center;font-size:11px;color:#1e4266;font-weight:bold;font-style:normal;"><span style="display:inline-block;transform:scaleX(0.9);transform-origin:left">Tournées</span></div>
<div class="t" style="left:928.5px;top:88px;width:59px;height:23px;justify-content:center;align-items:center;font-size:11px;color:#111;font-weight:normal;font-style:normal;"><span style="display:inline-block;transform:scaleX(0.91);transform-origin:center">Nadia</span></div>
<div class="t" style="left:987.5px;top:88px;width:44px;height:23px;justify-content:center;align-items:center;font-size:11px;color:#111;font-weight:normal;font-style:normal;">2</div>
<div class="t" style="left:928.5px;top:111px;width:59px;height:24px;justify-content:center;align-items:center;font-size:11px;color:#111;font-weight:normal;font-style:normal;"><span style="display:inline-block;transform:scaleX(0.91);transform-origin:center">Yassine</span></div>
<div class="t" style="left:987.5px;top:111px;width:44px;height:24px;justify-content:center;align-items:center;font-size:11px;color:#111;font-weight:normal;font-style:normal;">2</div>
<div class="t" style="left:928.5px;top:135px;width:59px;height:23px;justify-content:center;align-items:center;font-size:11px;color:#111;font-weight:normal;font-style:normal;"><span style="display:inline-block;transform:scaleX(0.91);transform-origin:center">Sara</span></div>
<div class="t" style="left:987.5px;top:135px;width:44px;height:23px;justify-content:center;align-items:center;font-size:11px;color:#111;font-weight:normal;font-style:normal;">1</div>
<div class="t" style="left:928.5px;top:158px;width:59px;height:24px;justify-content:center;align-items:center;font-size:11px;color:#111;font-weight:normal;font-style:normal;"><span style="display:inline-block;transform:scaleX(0.91);transform-origin:center">Karim</span></div>
<div class="t" style="left:987.5px;top:158px;width:44px;height:24px;justify-content:center;align-items:center;font-size:11px;color:#111;font-weight:normal;font-style:normal;">1</div>
<div class="t" style="left:928.5px;top:182px;width:59px;height:16px;justify-content:center;align-items:center;font-size:11px;color:#111;font-weight:normal;font-style:normal;"><span style="display:inline-block;transform:scaleX(0.91);transform-origin:center">Salma</span></div>
<div class="t" style="left:987.5px;top:182px;width:44px;height:16px;justify-content:center;align-items:center;font-size:11px;color:#111;font-weight:normal;font-style:normal;">0</div>
<div class="t" style="left:928.5px;top:198px;width:59px;height:25px;justify-content:center;align-items:center;font-size:11px;color:#111;font-weight:normal;font-style:normal;"><span style="display:inline-block;transform:scaleX(0.91);transform-origin:center">Omar</span></div>
<div class="t" style="left:987.5px;top:198px;width:44px;height:25px;justify-content:center;align-items:center;font-size:11px;color:#111;font-weight:normal;font-style:normal;">0</div>
<div style="left:928px;top:245px;width:103px;height:22px;background:#04736c;"></div>
<div class="t" style="left:929px;top:245px;width:102px;height:22px;justify-content:flex-start;align-items:center;font-size:11px;color:#fff;font-weight:bold;font-style:normal;"><span style="display:inline-block;transform:scaleX(0.93);transform-origin:left">Synthèse par véhicule</span></div>
<div style="left:928px;top:267px;width:103px;height:23px;background:#d5eded;"></div>
<div class="t" style="left:928px;top:267px;width:59px;height:23px;justify-content:center;align-items:center;font-size:11px;color:#0d776c;font-weight:bold;font-style:normal;"><span style="display:inline-block;transform:scaleX(0.9);transform-origin:center">Véhicule</span></div>
<div class="t" style="left:988px;top:267px;width:43px;height:23px;justify-content:flex-start;align-items:center;font-size:11px;color:#0d776c;font-weight:bold;font-style:normal;"><span style="display:inline-block;transform:scaleX(0.9);transform-origin:left">Tournées</span></div>
<div class="t" style="left:1032px;top:267px;width:60px;height:23px;justify-content:flex-start;align-items:center;font-size:11px;color:#0d776c;font-weight:bold;font-style:normal;"><span style="display:inline-block;transform:scaleX(0.9);transform-origin:left">Chev.</span></div>
<div class="t" style="left:928.5px;top:290.3px;width:59px;height:22px;justify-content:center;align-items:center;font-size:11px;color:#111;font-weight:normal;font-style:normal;"><span style="display:inline-block;transform:scaleX(0.93);transform-origin:center">VAN-01</span></div>
<div class="t" style="left:987.5px;top:290.3px;width:44px;height:22px;justify-content:center;align-items:center;font-size:11px;color:#111;font-weight:normal;font-style:normal;">2</div>
<div class="t" style="left:928.5px;top:312.3px;width:59px;height:22px;justify-content:center;align-items:center;font-size:11px;color:#111;font-weight:normal;font-style:normal;"><span style="display:inline-block;transform:scaleX(0.93);transform-origin:center">VAN-02</span></div>
<div class="t" style="left:987.5px;top:312.3px;width:44px;height:22px;justify-content:center;align-items:center;font-size:11px;color:#111;font-weight:normal;font-style:normal;">2</div>
<div class="t" style="left:928.5px;top:334.3px;width:59px;height:23px;justify-content:center;align-items:center;font-size:11px;color:#111;font-weight:normal;font-style:normal;"><span style="display:inline-block;transform:scaleX(0.93);transform-origin:center">VAN-03</span></div>
<div class="t" style="left:987.5px;top:334.3px;width:44px;height:23px;justify-content:center;align-items:center;font-size:11px;color:#111;font-weight:normal;font-style:normal;">1</div>
<div class="t" style="left:928.5px;top:357.3px;width:59px;height:22px;justify-content:center;align-items:center;font-size:11px;color:#111;font-weight:normal;font-style:normal;"><span style="display:inline-block;transform:scaleX(0.93);transform-origin:center">VAN-04</span></div>
<div class="t" style="left:987.5px;top:357.3px;width:44px;height:22px;justify-content:center;align-items:center;font-size:11px;color:#111;font-weight:normal;font-style:normal;">1</div>
<div class="t" style="left:928.5px;top:379.3px;width:59px;height:23px;justify-content:center;align-items:center;font-size:11px;color:#111;font-weight:normal;font-style:normal;"><span style="display:inline-block;transform:scaleX(0.87);transform-origin:center">TRUCK-01</span></div>
<div class="t" style="left:987.5px;top:379.3px;width:44px;height:23px;justify-content:center;align-items:center;font-size:11px;color:#111;font-weight:normal;font-style:normal;">0</div>
<div class="t" style="left:928.5px;top:402.3px;width:59px;height:22px;justify-content:center;align-items:center;font-size:11px;color:#111;font-weight:normal;font-style:normal;"><span style="display:inline-block;transform:scaleX(0.87);transform-origin:center">TRUCK-02</span></div>
<div class="t" style="left:987.5px;top:402.3px;width:44px;height:22px;justify-content:center;align-items:center;font-size:11px;color:#111;font-weight:normal;font-style:normal;">0</div>
<div style="left:928px;top:26px;width:1px;height:401px;background:#c6d7ec;"></div>
<div style="left:1125px;top:26px;width:1px;height:401px;background:#c6d7ec;"></div>
<div style="left:1207px;top:26px;width:1px;height:401px;background:#c6d7ec;"></div>
<div style="left:1031px;top:26px;width:2px;height:401px;background:#c6d7ec;"></div>
<div style="left:987px;top:26px;width:1px;height:24px;background:#c6d7ec;"></div>
<div style="left:987px;top:66px;width:1px;height:179px;background:#c6d7ec;"></div>
<div style="left:987px;top:267px;width:1px;height:160px;background:#c6d7ec;"></div>
<div style="left:928px;top:26px;width:357px;height:1px;background:#c6d7ec;"></div>
<div style="left:928px;top:50px;width:357px;height:1px;background:#c6d7ec;"></div>
<div style="left:928px;top:66px;width:357px;height:1px;background:#c6d7ec;"></div>
<div style="left:928px;top:87px;width:357px;height:1px;background:#c6d7ec;"></div>
<div style="left:928px;top:110px;width:357px;height:1px;background:#c6d7ec;"></div>
<div style="left:928px;top:134px;width:357px;height:1px;background:#c6d7ec;"></div>
<div style="left:928px;top:157px;width:357px;height:1px;background:#c6d7ec;"></div>
<div style="left:928px;top:181px;width:357px;height:1px;background:#c6d7ec;"></div>
<div style="left:928px;top:197px;width:357px;height:1px;background:#c6d7ec;"></div>
<div style="left:928px;top:222px;width:357px;height:1px;background:#c6d7ec;"></div>
<div style="left:928px;top:245px;width:357px;height:1px;background:#c6d7ec;"></div>
<div style="left:928px;top:267px;width:357px;height:1px;background:#c6d7ec;"></div>
<div style="left:928px;top:290px;width:357px;height:1px;background:#c6d7ec;"></div>
<div style="left:928px;top:312px;width:357px;height:1px;background:#c6d7ec;"></div>
<div style="left:928px;top:334px;width:357px;height:1px;background:#c6d7ec;"></div>
<div style="left:928px;top:357px;width:357px;height:1px;background:#c6d7ec;"></div>
<div style="left:928px;top:379px;width:357px;height:1px;background:#c6d7ec;"></div>
<div style="left:928px;top:402px;width:357px;height:1px;background:#c6d7ec;"></div>
<div style="left:928px;top:424px;width:357px;height:1px;background:#c6d7ec;"></div>
<div style="left:1031px;top:65px;width:243px;height:212px;background:#ffffff;border:1px solid #e3e3e3;"></div>
<div class="t" style="left:1031px;top:69px;width:243px;height:20px;justify-content:center;align-items:center;font-size:13.5px;color:#222;font-weight:normal;font-style:normal;">Km par chauffeur</div>
<div class="t" style="left:1025px;top:106.5px;width:32.5px;height:12px;justify-content:flex-end;align-items:center;font-size:7.4px;color:#666;font-weight:normal;font-style:normal;">Omar</div>
<div class="t" style="left:1025px;top:128.8px;width:32.5px;height:12px;justify-content:flex-end;align-items:center;font-size:7.4px;color:#666;font-weight:normal;font-style:normal;">Salma</div>
<div class="t" style="left:1025px;top:151.1px;width:32.5px;height:12px;justify-content:flex-end;align-items:center;font-size:7.4px;color:#666;font-weight:normal;font-style:normal;">Karim</div>
<div style="left:1061px;top:155px;width:92px;height:7px;background:#3a7fc1;border-radius:0 1.5px 1.5px 0;"></div>
<div class="t" style="left:1025px;top:173.4px;width:32.5px;height:12px;justify-content:flex-end;align-items:center;font-size:7.4px;color:#666;font-weight:normal;font-style:normal;">Sara</div>
<div style="left:1061px;top:177px;width:85px;height:7px;background:#3a7fc1;border-radius:0 1.5px 1.5px 0;"></div>
<div class="t" style="left:1025px;top:195.7px;width:32.5px;height:12px;justify-content:flex-end;align-items:center;font-size:7.4px;color:#666;font-weight:normal;font-style:normal;">Yassine</div>
<div style="left:1061px;top:199px;width:134px;height:7px;background:#3a7fc1;border-radius:0 1.5px 1.5px 0;"></div>
<div class="t" style="left:1025px;top:218.0px;width:32.5px;height:12px;justify-content:flex-end;align-items:center;font-size:7.4px;color:#666;font-weight:normal;font-style:normal;">Nadia</div>
<div style="left:1061px;top:222px;width:136px;height:7px;background:#3a7fc1;border-radius:0 1.5px 1.5px 0;"></div>
<div style="left:1061px;top:240px;width:138px;height:1px;background:#9a9a9a;"></div>
<div style="left:1061px;top:240px;width:1px;height:4px;background:#9a9a9a;"></div>
<div class="t" style="left:1051px;top:244px;width:20px;height:11px;justify-content:center;align-items:center;font-size:7px;color:#666;font-weight:normal;font-style:normal;">0</div>
<div style="left:1092px;top:240px;width:1px;height:4px;background:#9a9a9a;"></div>
<div class="t" style="left:1082px;top:244px;width:20px;height:11px;justify-content:center;align-items:center;font-size:7px;color:#666;font-weight:normal;font-style:normal;">20</div>
<div style="left:1123px;top:240px;width:1px;height:4px;background:#9a9a9a;"></div>
<div class="t" style="left:1113px;top:244px;width:20px;height:11px;justify-content:center;align-items:center;font-size:7px;color:#666;font-weight:normal;font-style:normal;">40</div>
<div style="left:1153px;top:240px;width:1px;height:4px;background:#9a9a9a;"></div>
<div class="t" style="left:1143px;top:244px;width:20px;height:11px;justify-content:center;align-items:center;font-size:7px;color:#666;font-weight:normal;font-style:normal;">60</div>
<div style="left:1184px;top:240px;width:1px;height:4px;background:#9a9a9a;"></div>
<div class="t" style="left:1174px;top:244px;width:20px;height:11px;justify-content:center;align-items:center;font-size:7px;color:#666;font-weight:normal;font-style:normal;">80</div>
<div style="left:1212px;top:179px;width:8px;height:8px;background:#3a7fc1;border-radius:1.5px;"></div>
<div class="t" style="left:1224px;top:177px;width:40px;height:12px;justify-content:flex-start;align-items:center;font-size:7.5px;color:#555;font-weight:normal;font-style:normal;">Series 1</div>
</div></body></html>
